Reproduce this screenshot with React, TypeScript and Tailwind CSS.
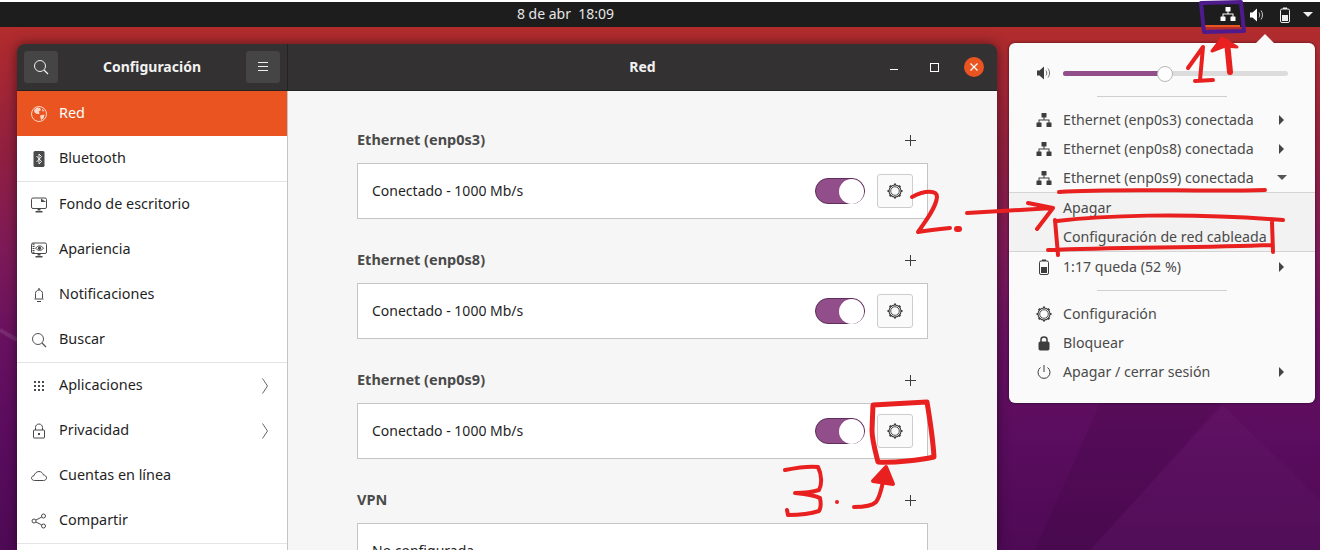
import type { ReactNode } from 'react';

const font = 'font-["Noto_Sans","Open_Sans",sans-serif]';

function NetIcon({ className = '' }: { className?: string }) {
  return (
    <svg width="16" height="16" viewBox="0 0 16 16" className={className} fill="currentColor">
      <rect x="5.500" y="1" width="5" height="4.500" rx="0.500" />
      <rect x="0.500" y="10.500" width="5" height="4.500" rx="0.500" />
      <rect x="10.500" y="10.500" width="5" height="4.500" rx="0.500" />
      <path d="M7.500 5h1v2.500h5V11h-1V8.500h-9V11h-1V7.500h5z" />
    </svg>
  );
}

function SpeakerIcon({ className = '' }: { className?: string }) {
  return (
    <svg width="16" height="16" viewBox="0 0 16 16" className={className} fill="none">
      <path d="M1 5.500h2.500L8 1.500v13l-4.500-4H1z" fill="currentColor" />
      <path d="M10 5.500c1 1.500 1 3.500 0 5M12 3.500c2 2.500 2 6.500 0 9" stroke="currentColor" strokeWidth="1" opacity="0.75" />
    </svg>
  );
}

function BatteryIcon({ className = '' }: { className?: string }) {
  return (
    <svg width="16" height="16" viewBox="0 0 16 16" className={className} fill="none">
      <path d="M6 0.500h4v1.500H6z" fill="currentColor" />
      <rect x="3.500" y="2" width="9" height="13.500" rx="1.500" stroke="currentColor" />
      <rect x="5" y="8" width="6" height="6" fill="currentColor" />
    </svg>
  );
}

function GearIcon({ size = 16 }: { size?: number }) {
  const teeth = [0, 45, 90, 135, 180, 225, 270, 315];
  return (
    <svg width={size} height={size} viewBox="0 0 16 16" fill="none" stroke="currentColor">
      <circle cx="8" cy="8" r="6" strokeWidth="1.100" />
      <circle cx="8" cy="8" r="4.300" strokeWidth="0.900" />
      {teeth.map((a) => (
        <rect key={a} x="7" y="0.500" width="2" height="1.500" fill="currentColor" stroke="none" transform={`rotate(${a} 8 8)`} />
      ))}
    </svg>
  );
}

function Magnifier({ className = '' }: { className?: string }) {
  return (
    <svg width="16" height="16" viewBox="0 0 16 16" fill="none" stroke="currentColor" className={className}>
      <circle cx="7" cy="7" r="5.500" />
      <path d="M11 11l4 4" strokeWidth="1.300" />
    </svg>
  );
}

const sidebarIcons: Record<string, ReactNode> = {
  Red: (
    <svg width="16" height="16" viewBox="0 0 16 16">
      <circle cx="8" cy="8" r="7.500" fill="none" stroke="#fbd5c5" />
      <path d="M3 4l3-2.500 3 .5 1 2-2 1.500L8.500 8 6 8 3.500 6.500zM9 9.500l4.500-1-1 4-2.500 1.500zM11 2.500l2.500 2.500-2 .5z" fill="#fbd5c5" />
    </svg>
  ),
  Bluetooth: (
    <svg width="16" height="16" viewBox="0 0 16 16">
      <rect x="2.500" y="0" width="11" height="16" rx="1.500" fill="#4a4a4a" />
      <path d="M5.500 5l5 5.500L8 13V3l2.500 2.500-5 5.500" fill="none" stroke="#fff" strokeWidth="0.900" />
    </svg>
  ),
  'Fondo de escritorio': (
    <svg width="16" height="16" viewBox="0 0 16 16" fill="none" stroke="#4a4a4a">
      <rect x="0.500" y="1" width="15" height="10.500" rx="1.500" />
      <path d="M10 1.500v3.500h5z" fill="#4a4a4a" stroke="none" />
      <path d="M6.500 12h3v1.500h-3zM4.500 14h7v1.500h-7z" fill="#4a4a4a" stroke="none" />
    </svg>
  ),
  Apariencia: (
    <svg width="16" height="16" viewBox="0 0 16 16" fill="none" stroke="#4a4a4a">
      <rect x="0.500" y="1" width="15" height="10.500" rx="1.500" />
      <path d="M2.500 1.500v10" strokeDasharray="1.200 1" strokeWidth="2" />
      <path d="M4.500 6.200c2.500-3 6-3 8 0-2 3-5.500 3-8 0z" />
      <circle cx="8.500" cy="6.200" r="1.300" fill="#4a4a4a" />
      <path d="M6.500 12h3v1.500h-3zM4.500 14h7v1.500h-7z" fill="#4a4a4a" stroke="none" />
    </svg>
  ),
  Notificaciones: (
    <svg width="16" height="16" viewBox="0 0 16 16" fill="none" stroke="#4a4a4a">
      <path d="M4.500 11.500V6.500c0-2 1.500-3.500 3.500-3.500s3.500 1.500 3.500 3.500v5M3.500 12h9" />
      <path d="M8 1v2M6 14.500h4" strokeWidth="1.200" />
    </svg>
  ),
  Buscar: <Magnifier className="text-[#555]" />,
  Aplicaciones: (
    <svg width="16" height="16" viewBox="0 0 16 16" fill="#4a4a4a">
      {[3, 7, 11].flatMap((y) =>
        [3, 7, 11].map((x) => <rect key={`${x}-${y}`} x={x} y={y} width="2" height="2" />),
      )}
    </svg>
  ),
  Privacidad: (
    <svg width="16" height="16" viewBox="0 0 16 16" fill="none" stroke="#4a4a4a">
      <path d="M4.500 7V4.500C4.500 2.500 6 1 8 1s3.500 1.500 3.500 3.500V7" />
      <rect x="2.500" y="7" width="11" height="8" rx="0.500" />
      <rect x="7" y="10" width="2" height="2" fill="#4a4a4a" stroke="none" />
    </svg>
  ),
  'Cuentas en línea': (
    <svg width="16" height="16" viewBox="0 0 16 16" fill="none" stroke="#4a4a4a">
      <path d="M3.500 12.500C1.500 12.500 .5 11 .5 10s1-2.300 2.500-2.300C3.500 5.500 5.500 3.500 8 3.500c2.300 0 3.800 1.500 4.300 3.400 2 .2 3.200 1.600 3.200 3 0 1.300-1 2.600-3 2.600z" />
    </svg>
  ),
  Compartir: (
    <svg width="16" height="16" viewBox="0 0 16 16" fill="none" stroke="#4a4a4a">
      <circle cx="3" cy="8" r="2" />
      <circle cx="12.500" cy="3" r="2" />
      <circle cx="12.500" cy="13" r="2" />
      <path d="M5 7l5.800-3M5 9l5.800 3" />
    </svg>
  ),
};

type Row = { label: string; arrow?: boolean; sep?: boolean; active?: boolean };

const sidebar: Row[] = [
  { label: 'Red', active: true },
  { label: 'Bluetooth', sep: true },
  { label: 'Fondo de escritorio' },
  { label: 'Apariencia' },
  { label: 'Notificaciones' },
  { label: 'Buscar', sep: true },
  { label: 'Aplicaciones', arrow: true },
  { label: 'Privacidad', arrow: true },
  { label: 'Cuentas en línea' },
  { label: 'Compartir', sep: true },
];

const sections = [
  { title: 'Ethernet (enp0s3)', status: 'Conectado - 1000 Mb/s' },
  { title: 'Ethernet (enp0s8)', status: 'Conectado - 1000 Mb/s' },
  { title: 'Ethernet (enp0s9)', status: 'Conectado - 1000 Mb/s' },
];

function Plus() {
  return (
    <svg width="11" height="11" viewBox="0 0 11 11" stroke="#3d3d3d" className="mr-[12px]">
      <path d="M5.500 0v11M0 5.500h11" />
    </svg>
  );
}

function SectionTitle({ title }: { title: string }) {
  return (
    <div className="flex h-[24px] items-center justify-between">
      <span className="text-[14.5px] font-bold text-[#4a4a4a]">{title}</span>
      <Plus />
    </div>
  );
}

function Section({ title, status }: { title: string; status: string }) {
  return (
    <div className="mb-[29px]">
      <SectionTitle title={title} />
      <div className="mt-[11px] flex h-[56px] items-center justify-between border border-[#c4c4c4] bg-white px-[14px]">
        <span className="pb-[2px] text-[14px] text-[#1f1f1f]">{status}</span>
        <div className="flex items-center gap-[12px]">
          <div className="flex h-[26px] w-[50px] items-center justify-end rounded-full border border-[#5f2d5a] bg-[#924d8b]">
            <div className="h-[25px] w-[25px] rounded-full bg-white" />
          </div>
          <div className="flex h-[34px] w-[36px] items-center justify-center rounded-[3px] border border-[#cdcdcd] bg-[#fafafa] text-[#3d3d3d]">
            <GearIcon />
          </div>
        </div>
      </div>
    </div>
  );
}

function Chevron() {
  return (
    <svg width="6" height="16" viewBox="0 0 6 16" fill="none" stroke="#666" className="mr-[2px]">
      <path d="M.5 .5l5 7.500-5 7.500" />
    </svg>
  );
}

function Window() {
  return (
    <div className="absolute top-[44px] left-[17px] flex h-[506px] w-[980px] flex-col overflow-hidden rounded-t-[8px] shadow-[0_0_12px_rgba(0,0,0,0.5)]">
      <div className="flex h-[47px] shrink-0 border-b border-[#232323] bg-[#333131] text-white">
        <div className="flex w-[271px] items-center justify-between border-r border-[#232323] px-[7px]">
          <div className="flex h-[32px] w-[34px] items-center justify-center rounded-[3px] bg-[#454545]">
            <Magnifier className="text-[#eee]" />
          </div>
          <span className="pb-[2px] text-[14px] font-bold text-[#f2f2f2]">Configuración</span>
          <div className="flex h-[32px] w-[34px] items-center justify-center rounded-[3px] bg-[#454545]">
            <svg width="12" height="10" viewBox="0 0 12 10" stroke="#eee">
              <path d="M1 .5h10M1 4.500h10M1 8.500h10" />
            </svg>
          </div>
        </div>
        <div className="relative flex flex-1 items-center justify-center">
          <span className="pb-[2px] text-[14px] font-bold text-[#f2f2f2]">Red</span>
          <div className="absolute right-[13px] flex items-center">
            <div className="mt-[5px] h-[1px] w-[8px] bg-white" />
            <div className="ml-[32px] h-[9px] w-[9px] border border-white" />
            <div className="ml-[25px] flex h-[20px] w-[20px] items-center justify-center rounded-full bg-[#e95420]">
              <svg width="8" height="8" viewBox="0 0 8 8" stroke="#fff" strokeWidth="1.200">
                <path d="M.5.5l7 7M7.500.5l-7 7" />
              </svg>
            </div>
          </div>
        </div>
      </div>
      <div className="flex min-h-0 flex-1">
        <div className="w-[271px] shrink-0 border-r border-[#c4c4c4] bg-white">
          {sidebar.map((r) => (
            <div key={r.label} className={r.sep ? 'border-b border-[#e4e4e4]' : ''}>
              <div className={`flex h-[45px] items-center gap-[12px] pr-[17px] pl-[14px] text-[14.4px] ${r.active ? 'bg-[#e95420] text-white' : 'text-[#1f1f1f]'}`}>
                <span className="flex w-[16px] justify-center">{sidebarIcons[r.label]}</span>
                <span className="flex-1 pb-[1px]">{r.label}</span>
                {r.arrow && <Chevron />}
              </div>
            </div>
          ))}
        </div>
        <div className="flex-1 bg-[#f6f6f6] pt-[37px] pr-[69px] pl-[69px]">
          {sections.map((s) => (
            <Section key={s.title} title={s.title} status={s.status} />
          ))}
          <SectionTitle title="VPN" />
          <div className="mt-[11px] flex h-[56px] items-center border border-[#c4c4c4] bg-white px-[14px] text-[14px] text-[#1f1f1f]">
            <span className="pb-[2px]">No configurada</span>
          </div>
        </div>
      </div>
    </div>
  );
}

function Caret({ down = false }: { down?: boolean }) {
  return down ? (
    <svg width="10" height="5" viewBox="0 0 10 5" fill="#555" className="mr-[-3px]">
      <path d="M0 0h10L5 5z" />
    </svg>
  ) : (
    <svg width="5" height="10" viewBox="0 0 5 10" fill="#444">
      <path d="M0 0l5 5-5 5z" />
    </svg>
  );
}

function MenuItem({ icon, label, caret }: { icon?: ReactNode; label: string; caret?: 'right' | 'down' }) {
  return (
    <div className="flex h-[29px] items-center pr-[31px] pl-[27px] text-[14.2px] text-[#4a4a4a]">
      <span className="flex w-[16px] justify-center text-[#3d3d3d]">{icon}</span>
      <span className="ml-[11px] flex-1">{label}</span>
      {caret && <Caret down={caret === 'down'} />}
    </div>
  );
}

function MenuSeparator() {
  return <div className="mx-[88px] h-[1px] bg-[#cfcfcf]" />;
}

function Popover() {
  return (
    <div className="absolute top-[43px] left-[1009px] w-[306px] rounded-[6px] bg-[#fafafa] shadow-[0_0_3px_rgba(0,0,0,0.6)]">
      <div className="absolute top-[-6px] left-[249px] h-[14px] w-[14px] rotate-45 bg-[#fafafa]" />
      <div className="relative flex h-[53px] flex-col">
        <div className="mt-[22px] flex items-center pr-[27px] pl-[27px]">
          <SpeakerIcon className="text-[#3d3d3d]" />
          <div className="relative ml-[11px] h-[5px] flex-1 rounded-full bg-[#dcdcdc]">
            <div className="h-[5px] w-[102px] rounded-full bg-[#924d8b]" />
            <div className="absolute top-[-5px] left-[94px] h-[16px] w-[16px] rounded-full border border-[#b5b5b5] bg-white" />
          </div>
        </div>
      </div>
      <MenuSeparator />
      <div className="pt-[8px]">
        <MenuItem icon={<NetIcon />} label="Ethernet (enp0s3) conectada" caret="right" />
        <MenuItem icon={<NetIcon />} label="Ethernet (enp0s8) conectada" caret="right" />
        <MenuItem icon={<NetIcon />} label="Ethernet (enp0s9) conectada" caret="down" />
      </div>
      <div className="border-y border-[#d4d4d4] bg-[#f2f2f2]">
        <MenuItem label="Apagar" />
        <MenuItem label="Configuración de red cableada" />
      </div>
      <MenuItem icon={<BatteryIcon />} label="1:17 queda (52 %)" caret="right" />
      <div className="h-[9px]" />
      <MenuSeparator />
      <div className="pt-[8px] pb-[17px]">
        <MenuItem icon={<GearIcon />} label="Configuración" />
        <MenuItem
          icon={
            <svg width="16" height="16" viewBox="0 0 16 16" fill="none" stroke="currentColor">
              <path d="M5 7V4.500C5 3 6.300 2 8 2s3 1 3 2.500V7" strokeWidth="1.500" />
              <rect x="3" y="7" width="10" height="8" rx="1" fill="currentColor" />
            </svg>
          }
          label="Bloquear"
        />
        <MenuItem
          icon={
            <svg width="16" height="16" viewBox="0 0 16 16" fill="none" stroke="currentColor">
              <path d="M8 1v7" />
              <path d="M4.500 3.500a6 6 0 1 0 7 0" />
            </svg>
          }
          label="Apagar / cerrar sesión"
          caret="right"
        />
      </div>
    </div>
  );
}

// faint facets of the wallpaper
function Wallpaper() {
  return (
    <svg width="1320" height="550" viewBox="0 0 1320 550" className="absolute top-0 left-0">
      <path d="M1100 403H1222L1090 550H1035Z" fill="#000" opacity="0.07" />
      <path d="M1223 405L1320 500V550H1090Z" fill="#fff" opacity="0.02" />
      <path d="M0 330L17 340" stroke="#fff" strokeWidth="4" opacity="0.1" />
    </svg>
  );
}

// hand drawn markup on top of the screenshot
function Annotations() {
  return (
    <svg width="1320" height="550" viewBox="0 0 1320 550" fill="none" strokeLinecap="round" strokeLinejoin="round" className="pointer-events-none absolute top-0 left-0">
      <path d="M1201 3L1241 2L1244 31L1204 32Z" stroke="#4f1a8c" strokeWidth="4" />
      <g stroke="#e8201f" strokeWidth="4">
        <path d="M1188 68L1203 47L1200 80M1195 81L1213 80" />
        <path d="M1227 42L1230 72" strokeWidth="6" />
        <path d="M1212 51L1222 38L1237 47L1225 46Z" fill="#e8201f" strokeWidth="3" />
        <path d="M1059 192C1120 188 1200 192 1265 190" />
        <path d="M967 213L1053 208M1028 203L1053 208L1037 229" />
        <path d="M1057 221C1100 216 1180 212 1283 220M1055 220L1058 255M1048 250C1120 247 1200 248 1273 245M1272 222L1273 252" />
        <path d="M912 197C925 190 937 190 937 197C936 208 925 222 918 232C930 230 940 229 950 228" />
        <path d="M957 229L959 229" strokeWidth="6" />
        <path d="M785 470C800 467 810 466 818 467C822 475 822 485 819 490C810 493 802 493 795 493C805 494 815 495 820 498C821 503 821 508 819 511C810 514 798 515 788 515L787 510" />
        <path d="M837 502L837 502" strokeWidth="4" />
        <path d="M854 507C865 507 872 506 876 502C880 497 881 490 883 482" />
        <path d="M873 481L886 467L893 484Z" fill="#e8201f" />
        <path d="M873 405L927 402C930 420 933 440 934 457C920 460 895 463 878 462C875 450 872 440 872 430Z" strokeWidth="5" />
      </g>
    </svg>
  );
}

export default function App() {
  return (
    <div className={`relative h-[550px] w-[1320px] overflow-hidden bg-[linear-gradient(180deg,#b22c2c_5%,#92203f_27%,#7e1a58_45%,#681160_62%,#5a0c5e_80%,#4e0a55_100%)] ${font}`}>
      <Wallpaper />
      <div className="relative h-[2px] bg-white" />
      <div className="relative flex h-[25px] items-center justify-center bg-[#1d1d1d] text-[14px] text-[#e6e6e6]">
        <span className="mr-[189px] pb-[2px]">8 de abr&nbsp;&nbsp;18:09</span>
        <div className="absolute right-0 flex h-[25px] items-center text-white">
          <div className="mr-[9px] flex h-[25px] w-[35px] items-center justify-center border-b-2 border-[#e95420] pl-[11px]">
            <NetIcon />
          </div>
          <SpeakerIcon />
          <BatteryIcon className="ml-[12px] text-[#eee]" />
          <svg width="10" height="5" viewBox="0 0 10 5" fill="#eee" className="mr-[7px] ml-[10px]">
            <path d="M0 0h10L5 5z" />
          </svg>
        </div>
      </div>
      <Window />
      <Popover />
      <Annotations />
    </div>
  );
}
